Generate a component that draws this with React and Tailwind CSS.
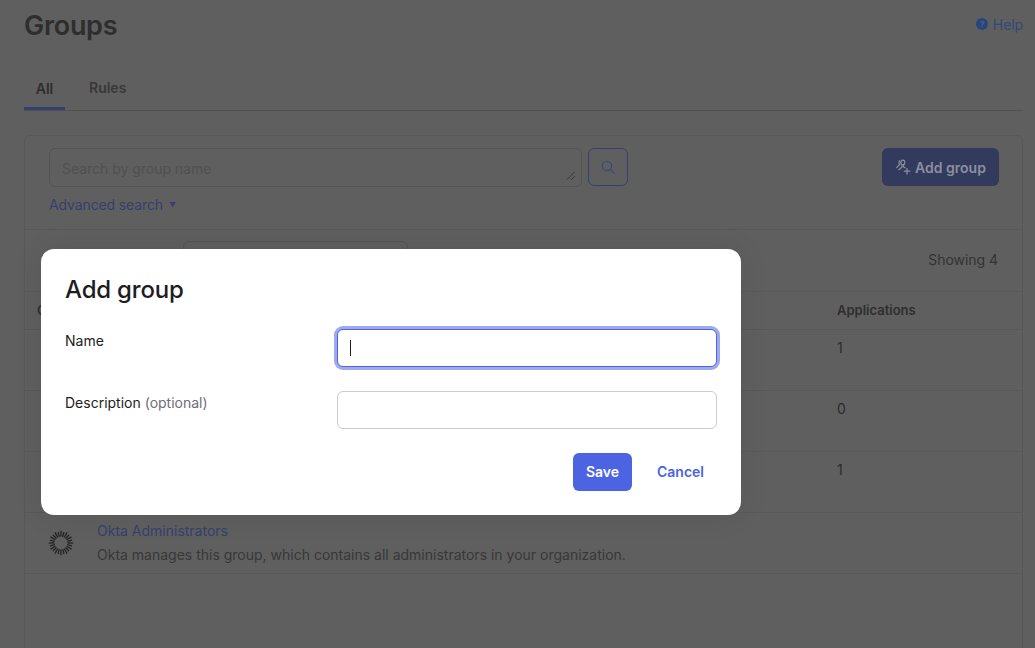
import React from 'react';

const ticks = Array.from({ length: 24 }, (_, i) => (i * 360) / 24);

function OktaAura() {
  return (
    <svg width="26" height="26" viewBox="0 0 26 26">
      {ticks.map((deg, i) => (
        <line
          key={deg}
          x1="13"
          y1={i % 2 ? 1.6 : 0.8}
          x2="13"
          y2="6.6"
          stroke="#242424"
          strokeWidth="1.3"
          transform={`rotate(${deg} 13 13)`}
        />
      ))}
    </svg>
  );
}

function AddGroupIcon() {
  return (
    <svg width="16" height="16" viewBox="0 0 16 16" fill="none" stroke="#8a8f9f" strokeWidth="1.2">
      <path d="M5 1.5C3.8 2 3.8 4.5 4.6 5.5L1.5 8.8" />
      <path d="M7.8 1.2c1.3 0 2 1 2 2.3s-.7 2.4-2 2.4-2-1.1-2-2.4 .7-2.3 2-2.3z" />
      <path d="M7 6v2L3.5 11M8.6 6v2l2 1" />
      <path d="M12 9v6.5M8.8 12.2h6.5" />
    </svg>
  );
}

const rows = [
  { id: 'a', apps: '1' },
  { id: 'b', apps: '0' },
  { id: 'c', apps: '1' },
];

export default function App() {
  return (
    <div className="relative h-[648px] overflow-hidden bg-[#5f5f5f] pl-6 pr-3 font-['Inter',sans-serif] text-[14px] text-[#303030]">
      <div className="flex h-[52px] items-start justify-between">
        <h1 className="mt-[8px] text-[27px] font-semibold leading-[36px] tracking-[-0.3px] text-[#2e2e2e]">Groups</h1>
        <a className="mt-[16px] flex items-center gap-[5px] leading-[18px] tracking-[-0.1px] text-[#2f4a78]">
          <span className="mb-[2px] flex h-[12px] w-[12px] items-center justify-center rounded-full bg-[#25477f] text-[8px] font-bold leading-none text-[#5f5f5f]">?</span>
          Help
        </a>
      </div>

      <div className="flex h-[59px] items-end border-b border-[#515151]">
        <div className="flex h-[44px] w-[41px] items-center justify-center border-b-[3px] border-[#33416f] pt-[4px] font-semibold text-[#2e2e2e]">All</div>
        <div className="ml-[24px] flex h-[44px] items-center pb-[1px] font-semibold text-[#383838]">Rules</div>
      </div>

      <div className="mt-[24px] h-[600px] rounded-t-[6px] border border-[#585858]">
        <div className="flex h-[94px] justify-between border-b border-[#585858] pl-[24px] pr-[23px] pt-[12px]">
          <div>
            <div className="flex items-start gap-[6px]">
              <div className="relative flex h-[39px] w-[533px] items-center rounded-[6px] border border-[#535353] pl-[12px] pt-[2px] tracking-[-0.03px] text-[#505050]">
                Search by group name
                <svg className="absolute bottom-[5px] right-[5px]" width="10" height="10" viewBox="0 0 10 10" stroke="#2c2c2c" strokeWidth="0.8">
                  <path d="M1 8.5 8.5 1M5 9 9 5" />
                </svg>
              </div>
              <div className="flex h-[38px] w-[40px] items-center justify-center rounded-[6px] border border-[#33416f]">
                <svg width="14" height="14" viewBox="0 0 14 14" fill="none" stroke="#3a4a7c" strokeWidth="1.3">
                  <circle cx="6" cy="6" r="4.7" />
                  <path d="m9.4 9.4 3.8 3.8" />
                </svg>
              </div>
            </div>
            <div className="mt-[9px] flex items-center gap-[6px] leading-[18px] tracking-[-0.12px] text-[#36406e]">
              Advanced search
              <span className="text-[7px] leading-none">▼</span>
            </div>
          </div>
          <div className="flex h-[38px] w-[117px] items-center justify-center gap-[4px] rounded-[6px] bg-[#323a5d] font-semibold text-[#8a8f9f]">
            <AddGroupIcon />
            Add group
          </div>
        </div>

        <div className="flex h-[62px] items-center justify-between border-b border-[#585858] pl-[158px] pr-[24px]">
          <div className="mb-[1px] h-[38px] w-[225px] rounded-[6px] border border-[#535353]" />
          <span className="mb-[3px] tracking-[-0.05px] text-[#333333]">Showing 4</span>
        </div>

        <div className="flex h-[38px] items-center justify-between border-b border-[#585858] pl-[12px] pt-[1px] text-[13px] font-semibold text-[#2e2e2e]">
          <span>Group</span>
          <div className="flex w-[185px]">
            <span>Applications</span>
          </div>
        </div>

        {rows.map((row) => (
          <div key={row.id} className="flex h-[61px] justify-end border-b border-[#585858] pt-[9px] last:h-[62px]">
            <span className="w-[185px] leading-[18px] text-[#2c2c2c]">{row.apps}</span>
          </div>
        ))}

        <div className="flex h-[61px] items-start gap-[22px] border-b border-[#585858] pl-[23px] pt-[9px]">
          <div className="mt-[8px]">
            <OktaAura />
          </div>
          <div className="ml-[1px] leading-[18px]">
            <div className="text-[#36406e]">Okta Administrators</div>
            <div className="mt-[6px] text-[#383838]">
              Okta manages this group, which contains all administrators in your organization.
            </div>
          </div>
        </div>
      </div>

      <div className="absolute left-[41px] top-[249px] h-[266px] w-[700px] rounded-[13px] bg-white px-[24px] pt-[25px] text-[#1d1d21] shadow-[0_0_30px_rgba(0,0,0,0.08)]">
        <h2 className="text-[24px] font-medium leading-[32px] tracking-[-0.2px]">Add group</h2>

        <div className="mt-[23px] flex h-[38px] justify-between">
          <label className="leading-[24px]">Name</label>
          <div className="flex h-[38px] w-[380px] items-center rounded-[6px] border border-[#4c64e1] bg-white pl-[12px] shadow-[0_0_0_3px_#9daaec]">
            <div className="h-[16px] w-px bg-[#1d1d21]" />
          </div>
        </div>

        <div className="mt-[24px] flex h-[38px] justify-between">
          <label className="leading-[24px]">
            Description <span className="text-[#6e6e78]">(optional)</span>
          </label>
          <input className="h-[38px] w-[380px] rounded-[6px] border border-[#cccccc] bg-white px-[12px] outline-none" />
        </div>

        <div className="mt-[24px] flex items-center justify-end">
          <button type="button" className="h-[38px] w-[59px] rounded-[6px] bg-[#4c64e1] pb-[1px] font-semibold text-white">
            Save
          </button>
          <button type="button" className="ml-[25px] mr-[13px] pb-[1px] font-semibold text-[#4c64e1]">
            Cancel
          </button>
        </div>
      </div>
    </div>
  );
}
